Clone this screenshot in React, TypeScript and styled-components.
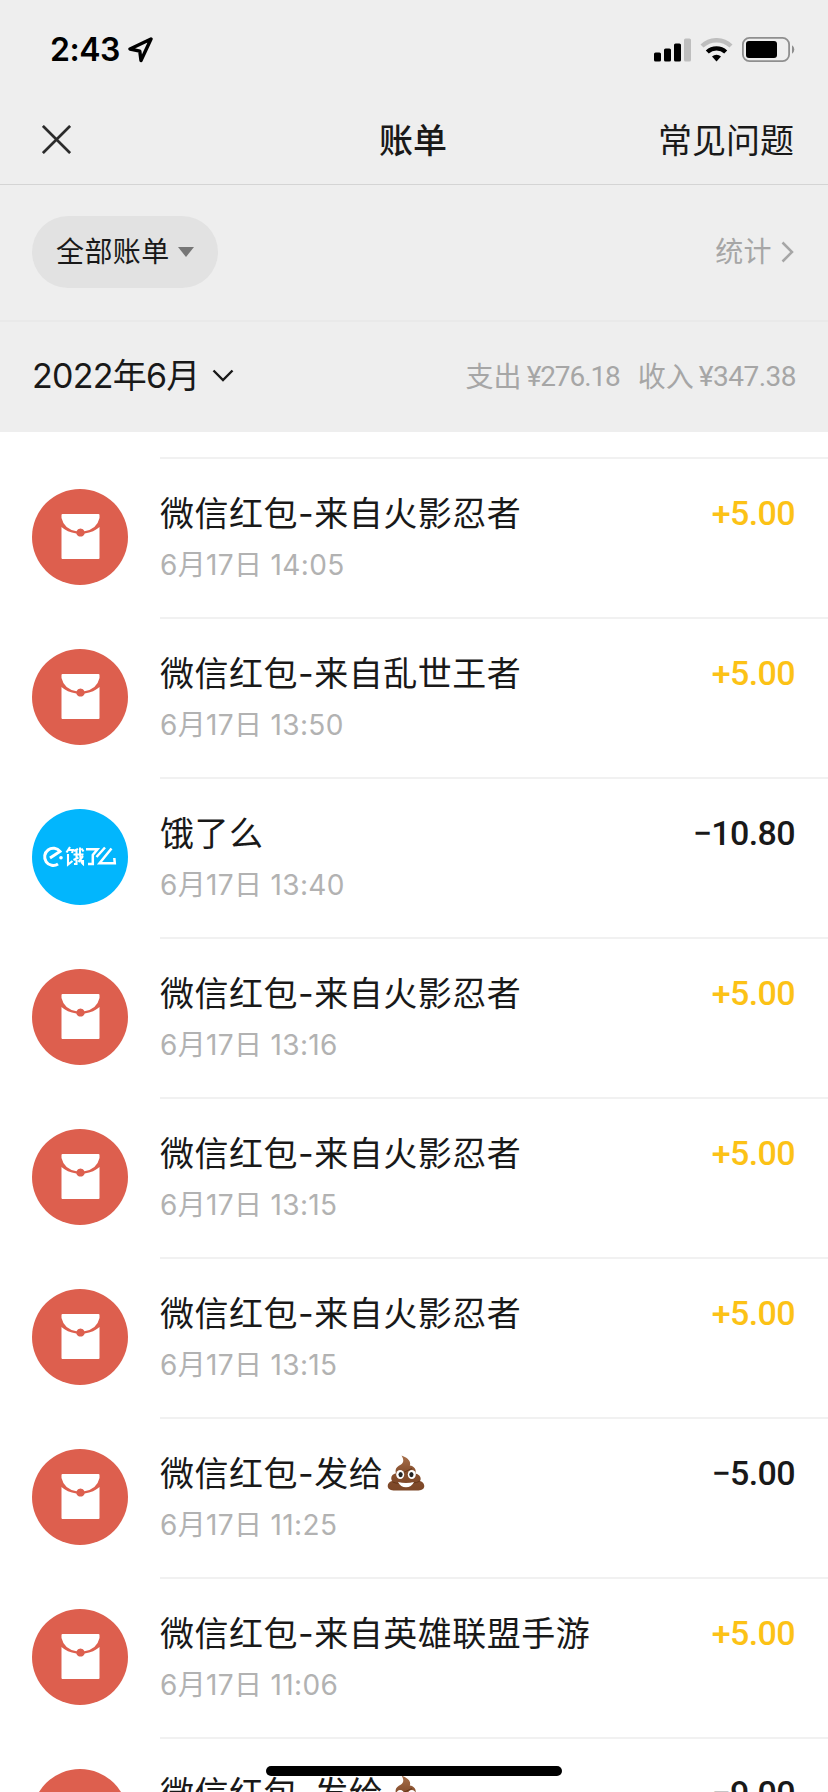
import React from 'react';
import styled, { createGlobalStyle } from 'styled-components';

const GlobalStyle = createGlobalStyle`
  * { box-sizing: border-box; }
  html, body { margin: 0; padding: 0; background: #fff; }
  body { font-family: Inter, 'Noto Sans CJK SC', sans-serif; color: #191919; }
`;

const Screen = styled.div`
  position: relative;
  width: 828px;
  height: 1792px;
  overflow: hidden;
  background: #fff;
`;

const StatusBar = styled.div`
  display: flex;
  justify-content: space-between;
  height: 96px;
  padding: 33px 33px 0 50px;
  background: #eeeeee;
  color: #000;
`;

const Clock = styled.div`
  display: flex;
  align-items: center;
  height: 34px;
  font-size: 32px;
  font-weight: 600;
  line-height: 34px;
`;

const ClockText = styled.span`
  width: 78px;
  letter-spacing: -0.5px;
  white-space: nowrap;
`;

const StatusIcons = styled.div`
  display: flex;
  gap: 9px;
  height: 33px;
  align-items: center;
`;

const NavBar = styled.div`
  display: grid;
  grid-template-columns: 1fr auto 1fr;
  align-items: center;
  height: 89px;
  padding: 0 34px 0 42px;
  background: #eeeeee;
  border-bottom: 1px solid #d4d4d4;
`;

const NavTitle = styled.h1`
  margin: 0;
  padding: 2px 10px 0 0;
  font-size: 34px;
  font-weight: 500;
  line-height: 48px;
`;

const NavLink = styled.div`
  justify-self: end;
  padding-top: 2px;
  font-size: 34px;
  line-height: 48px;
  white-space: nowrap;
`;

const FilterBar = styled.div`
  display: flex;
  align-items: center;
  justify-content: space-between;
  height: 137px;
  padding: 0 34px 1px 32px;
  background: #eeeeee;
  border-bottom: 2px solid #e9e9e9;
`;

const FilterPill = styled.div`
  display: flex;
  align-items: center;
  gap: 8px;
  height: 72px;
  width: 186px;
  padding-left: 24px;
  border-radius: 36px;
  background: #e2e2e2;
  font-size: 28px;
  letter-spacing: 0.4px;
`;

const FilterLabel = styled.span`
  height: 40px;
  line-height: 40px;
`;

const StatsLink = styled.div`
  display: flex;
  align-items: center;
  gap: 9px;
  color: #a6a6a6;
  font-size: 28px;
  letter-spacing: 0.4px;
`;

const MonthBar = styled.div`
  display: flex;
  align-items: center;
  justify-content: space-between;
  height: 110px;
  padding: 0 32px 1px;
  background: #eeeeee;
`;

const MonthPicker = styled.div`
  display: flex;
  align-items: center;
  gap: 12px;
  padding-bottom: 2px;
  font-size: 34px;
  letter-spacing: -0.75px;
  line-height: 48px;
`;

const Totals = styled.div`
  display: flex;
  gap: 18px;
  color: #a6a6a6;
  font-size: 28px;
  line-height: 40px;
`;

const Total = styled.div`
  display: flex;
  gap: 5px;
`;

const TotalValue = styled.span<{ $tracking: number }>`
  font-family: Roboto, sans-serif;
  letter-spacing: ${(p) => p.$tracking}px;
`;

const List = styled.div`
  padding-top: 25px;
`;

const Row = styled.div`
  display: flex;
  height: 160px;
  padding-left: 32px;
`;

const Avatar = styled.svg`
  flex: none;
  width: 96px;
  height: 96px;
  margin: 32px 32px 0 0;
`;

const RowBody = styled.div`
  display: flex;
  flex: 1;
  justify-content: space-between;
  padding: 28px 33px 0 0;
  border-top: 2px solid #f1f1f1;
`;

const RowTitle = styled.div`
  display: flex;
  align-items: center;
  height: 49px;
  font-size: 34px;
  letter-spacing: 0.5px;
  white-space: nowrap;
`;

const RowDate = styled.div`
  margin-top: 9px;
  height: 40px;
  color: #b2b2b2;
  font-size: 28px;
  letter-spacing: 0.35px;
  line-height: 40px;
`;

const Amount = styled.div<{ $income: boolean }>`
  height: 50px;
  padding-top: 1px;
  color: ${(p) => (p.$income ? '#fcc216' : '#191919')};
  font-family: Roboto, sans-serif;
  font-size: 34px;
  font-weight: 500;
  letter-spacing: -0.6px;
  line-height: 50px;
`;

const HomeIndicator = styled.div`
  position: absolute;
  left: 266px;
  bottom: 16px;
  width: 296px;
  height: 10px;
  border-radius: 5px;
  background: #000;
`;

const LocationIcon = () => (
  <svg width="26" height="26" viewBox="0 0 26 26" fill="none">
    <path d="M23 2 L2 12 L11.8 14.2 L13 23.5 Z" stroke="#000" strokeWidth="3.4" strokeLinejoin="round" />
  </svg>
);

const SignalIcon = () => (
  <svg width="37" height="24" viewBox="0 0 37 24">
    <rect x="0" y="14.5" width="7" height="9" rx="1.6" />
    <rect x="10" y="10.5" width="7" height="13" rx="1.6" />
    <rect x="20" y="5.5" width="7" height="18" rx="1.6" />
    <rect x="30" y="0.5" width="7" height="23" rx="1.6" fill="#bebebe" />
  </svg>
);

const WifiIcon = () => (
  <svg width="33" height="24" viewBox="0 0 33 24" fill="none">
    <path d="M2 8 A21 21 0 0 1 31 8" stroke="#bebebe" strokeWidth="4.4" />
    <path d="M7.3 14 A13.5 13.5 0 0 1 25.7 14" stroke="#000" strokeWidth="4.4" />
    <path d="M12 18.6 A6.6 6.6 0 0 1 21 18.6 L16.5 23.4 Z" fill="#000" />
  </svg>
);

const BatteryIcon = () => (
  <svg width="53" height="25" viewBox="0 0 53 25">
    <rect x="0.9" y="0.9" width="46.2" height="23.2" rx="6.5" fill="none" stroke="#8f8f8f" strokeWidth="1.8" />
    <rect x="4" y="4" width="31" height="17" rx="3" />
    <path d="M50 8.3 A5 5 0 0 1 50 16.7 Z" fill="#8e8e8e" />
  </svg>
);

const CloseSvg = styled.svg`
  width: 29px;
  height: 29px;
  margin-bottom: 1px;
`;

const CloseIcon = () => (
  <CloseSvg viewBox="0 0 29 29">
    <path d="M0.9 0.9 L28.1 28.1 M28.1 0.9 L0.9 28.1" stroke="#2b2b2b" strokeWidth="2.7" />
  </CloseSvg>
);

const RedPacket = () => (
  <Avatar viewBox="0 0 96 96">
    <circle cx="48" cy="48" r="48" fill="#dd5f4e" />
    <path d="M30.5 25 H66.5 Q67.5 25 67.5 26 V29 Q65 40 52.5 42.3 A4.3 4.3 0 0 0 44.5 42.3 Q32 40 29.5 29 V26 Q29.5 25 30.5 25 Z" fill="#fff" />
    <path d="M29.5 38 Q35 43 44.3 44.5 A4.4 4.4 0 0 0 52.7 44.5 Q62 43 67.5 38 V69 Q67.5 70 66.5 70 H30.5 Q29.5 70 29.5 69 Z" fill="#fff" />
  </Avatar>
);

const Eleme = () => (
  <Avatar viewBox="0 0 96 96">
    <circle cx="48" cy="48" r="48" fill="#02b6fd" />
    <g fill="none" stroke="#fff" strokeWidth="2.1">
      <path d="M18 49 L28 42.5 A8.6 8.6 0 1 0 26 55" strokeWidth="3" />
      <path d="M38 38 L34.5 43.5 M36 41 H41 L40 44 M36 45 V55.5 L40.5 52" />
      <path d="M42 42 L46 39.8 M44.5 41 V55 H42 M41.5 45.5 H51.5 M41.5 51 L46.5 48.5 M48 38.5 Q47.5 52 51 55 V51 M51 47 L46.5 53 M49.5 39.5 L51.5 42.5" />
      <path d="M54 40.2 H65.5 L60.8 46 V55 H56" strokeWidth="2.5" />
      <path d="M73 38.5 L64.5 48 M79.5 39.5 L67.5 54.3 H82.8 L82.3 49" strokeWidth="2.5" />
    </g>
    <circle cx="29" cy="48.7" r="1.8" fill="#fff" />
  </Avatar>
);

const PoopSvg = styled.svg`
  flex: none;
  width: 38px;
  height: 36px;
  margin: 3px 0 0 4px;
`;

const Poop = () => (
  <PoopSvg viewBox="0 0 38 36">
    <defs>
      <linearGradient id="poop" x1="0" y1="0" x2="0" y2="1">
        <stop offset="0" stopColor="#a8704b" />
        <stop offset="0.45" stopColor="#87502f" />
        <stop offset="1" stopColor="#7c4727" />
      </linearGradient>
    </defs>
    <path d="M14.5 0.5 C20 2.5 24.5 6 22.8 10.5 C28 11.5 29.5 15 28.3 18.5 C33 19.5 34.8 23 33 26 C37 27 38.3 31 36.5 33.5 C34.5 36.3 26 35.5 19 35.5 C12 35.5 3.5 36.3 1.5 33.5 C-0.3 31 1 27 5 26 C3 22.5 5 19 9 18.3 C7.5 14 10 11.3 14 9.5 C16.5 8 17.3 5 14.5 0.5 Z" fill="url(#poop)" />
    <path d="M10 18 Q18 18 25 13.5 M5.5 27 Q10 29 13 28 M25 28 Q30 28 33 26" fill="none" stroke="#663719" strokeWidth="1" />
    <ellipse cx="13.2" cy="19.5" rx="4" ry="4.5" fill="#fff" />
    <ellipse cx="24.8" cy="19.5" rx="4" ry="4.5" fill="#fff" />
    <ellipse cx="13.6" cy="19.6" rx="2.1" ry="2.6" fill="#222" />
    <ellipse cx="24.4" cy="19.6" rx="2.1" ry="2.6" fill="#222" />
    <path d="M11 27 Q19 29 27 27 Q24.5 32.3 19 32.3 Q13.5 32.3 11 27 Z" fill="#fff" />
  </PoopSvg>
);

type Bill = { title: string; date: string; amount: string; kind?: 'eleme'; poop?: boolean };

const bills: Bill[] = [
  { title: '微信红包-来自火影忍者', date: '6月17日 14:05', amount: '+5.00' },
  { title: '微信红包-来自乱世王者', date: '6月17日 13:50', amount: '+5.00' },
  { title: '饿了么', date: '6月17日 13:40', amount: '−10.80', kind: 'eleme' },
  { title: '微信红包-来自火影忍者', date: '6月17日 13:16', amount: '+5.00' },
  { title: '微信红包-来自火影忍者', date: '6月17日 13:15', amount: '+5.00' },
  { title: '微信红包-来自火影忍者', date: '6月17日 13:15', amount: '+5.00' },
  { title: '微信红包-发给', date: '6月17日 11:25', amount: '−5.00', poop: true },
  { title: '微信红包-来自英雄联盟手游', date: '6月17日 11:06', amount: '+5.00' },
  { title: '微信红包-发给', date: '6月17日 11:05', amount: '−9.00', poop: true },
];

export default function App() {
  return (
    <Screen>
      <GlobalStyle />
      <StatusBar>
        <Clock>
          <ClockText>2:43</ClockText>
          <LocationIcon />
        </Clock>
        <StatusIcons>
          <SignalIcon />
          <WifiIcon />
          <BatteryIcon />
        </StatusIcons>
      </StatusBar>
      <NavBar>
        <CloseIcon />
        <NavTitle>账单</NavTitle>
        <NavLink>常见问题</NavLink>
      </NavBar>
      <FilterBar>
        <FilterPill>
          <FilterLabel>全部账单</FilterLabel>
          <svg width="16" height="10" viewBox="0 0 16 10">
            <path d="M0 0 H16 L8 10 Z" fill="#767676" />
          </svg>
        </FilterPill>
        <StatsLink>
          <FilterLabel>统计</FilterLabel>
          <svg width="13" height="22" viewBox="0 0 13 22" fill="none">
            <path d="M1.5 1.5 L11 11 L1.5 20.5" stroke="#a6a6a6" strokeWidth="2.5" />
          </svg>
        </StatsLink>
      </FilterBar>
      <MonthBar>
        <MonthPicker>
          2022年6月
          <svg width="22" height="13" viewBox="0 0 22 13" fill="none">
            <path d="M1.5 1.5 L11 11 L20.5 1.5" stroke="#191919" strokeWidth="2.4" />
          </svg>
        </MonthPicker>
        <Totals>
          <Total>支出<TotalValue $tracking={-1.1}>¥276.18</TotalValue></Total>
          <Total>收入<TotalValue $tracking={-0.5}>¥347.38</TotalValue></Total>
        </Totals>
      </MonthBar>
      <List>
        {bills.map((bill, i) => (
          <Row key={i}>
            {bill.kind === 'eleme' ? <Eleme /> : <RedPacket />}
            <RowBody>
              <div>
                <RowTitle>
                  {bill.title}
                  {bill.poop && <Poop />}
                </RowTitle>
                <RowDate>{bill.date}</RowDate>
              </div>
              <Amount $income={bill.amount.startsWith('+')}>{bill.amount}</Amount>
            </RowBody>
          </Row>
        ))}
      </List>
      <HomeIndicator />
    </Screen>
  );
}
